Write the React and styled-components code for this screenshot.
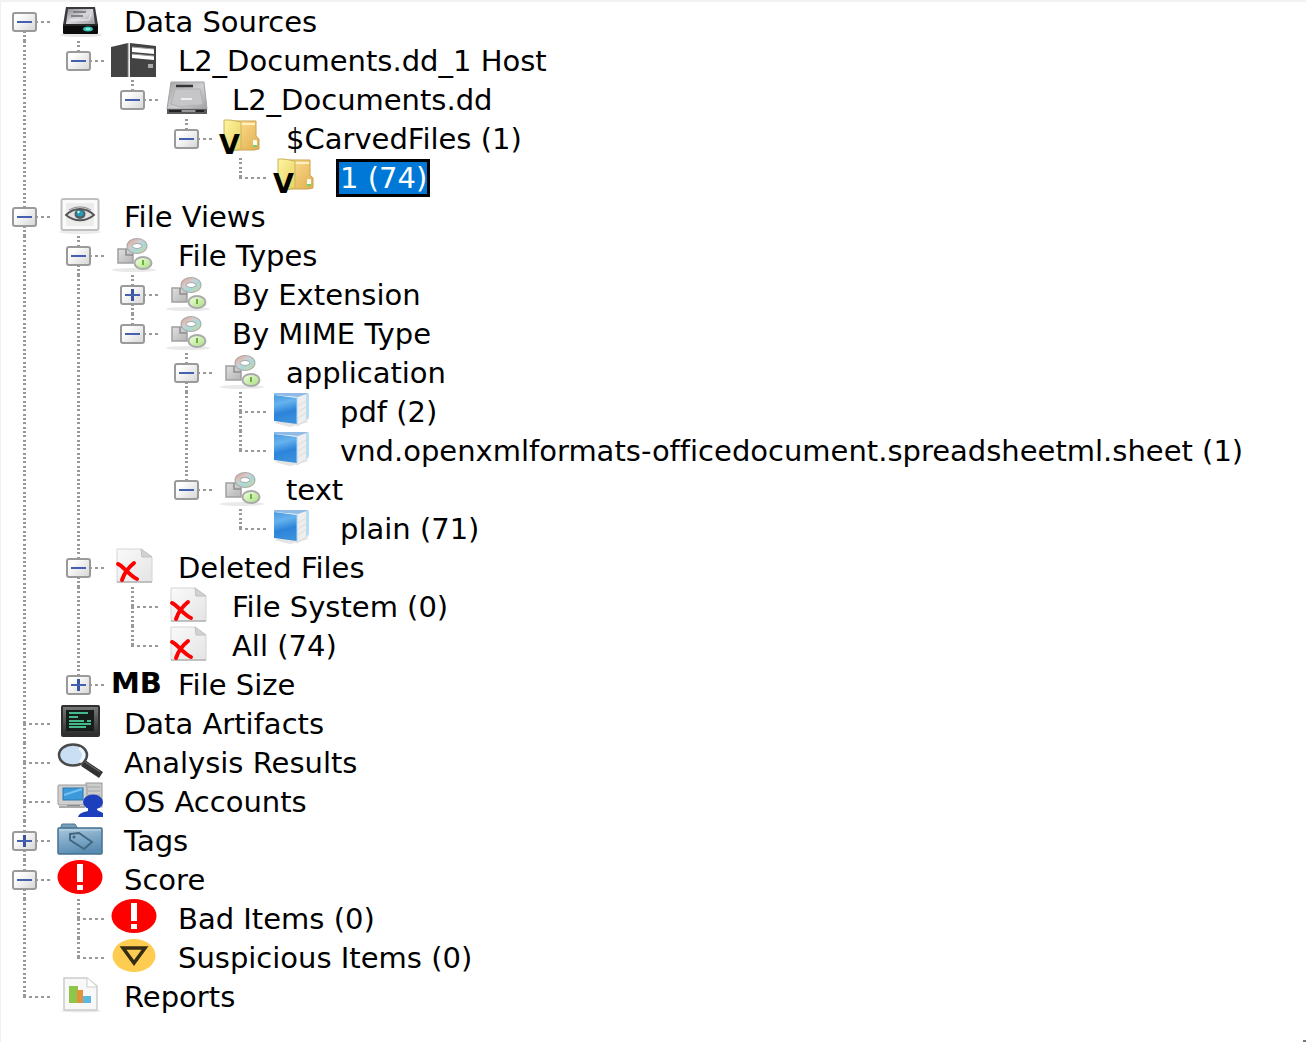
import React, { useState } from "react";
import styled, { createGlobalStyle, css } from "styled-components";

const GlobalStyle = createGlobalStyle`
  * { box-sizing: border-box; }
  body {
    margin: 0;
    background: #fff;
    color: #000;
    font-family: "DejaVu Sans", "Noto Sans", sans-serif;
    font-size: 29px;
    line-height: 32px;
    font-variant-ligatures: none;
  }
`;

const COLUMN = "54px";
const ROW = "39px";

/* Dotted connector strokes; one vertical tile is a third of a row. */
const dotsDown = `repeating-linear-gradient(to bottom,
  #999 0 2px, transparent 2px 4px, #999 4px 6px, transparent 6px 9px,
  #999 9px 11px, transparent 11px 13px)`;
const dotsAcross = `repeating-linear-gradient(to right,
  #999 0 3px, transparent 3px 6px)`;

const Page = styled.main`
  display: flex;
  flex-direction: column;
  min-height: 100vh;
  border-top: 2px solid #f2f2f2;
  border-left: 1px solid #f0f0f0;
  background: #fff;
`;

const Tree = styled.ul`
  margin: 0;
  padding: 0;
  list-style: none;
`;

const Row = styled.div`
  display: flex;
  align-items: center;
  min-height: ${ROW};
`;

const Guide = styled.span`
  flex: none;
  align-self: stretch;
  width: ${COLUMN};
  background: ${(p) => (p.$line ? `${dotsDown} 22px 0 / 3px 100% no-repeat` : "none")};
`;

const Joint = styled.span`
  flex: none;
  align-self: stretch;
  display: flex;
  align-items: center;
  width: ${COLUMN};
  padding-left: 11px;
  ${(p) => css`
    background-image: ${dotsAcross},
      ${p.$up ? dotsDown : "none"},
      ${p.$down ? dotsDown : "none"};
  `}
  background-repeat: no-repeat;
  background-position: 22px 19px, 22px 0, 22px 100%;
  background-size: 27px 2px, 3px 21px, 3px 19px;
`;

const Expander = styled.button`
  display: grid;
  place-items: center;
  width: 25px;
  height: 20px;
  margin: 0;
  padding: 0;
  border: 2px solid #9a9a9a;
  border-radius: 3px;
  background: linear-gradient(135deg, #fff 20%, #d8d8d8);
  cursor: pointer;
`;

const Sign = styled.span`
  width: 15px;
  height: 12px;
  background:
    linear-gradient(#4460ae, #4460ae) center / 15px 2px no-repeat,
    linear-gradient(#3c55a0, #3c55a0) center / ${(p) => (p.$plus ? "3px 12px" : "0 0")} no-repeat;
`;

const IconBox = styled.span`
  flex: none;
  display: flex;
  align-items: center;
  width: 48px;
  height: ${ROW};
`;

const SizeUnit = styled.span`
  padding: 0 0 4px 2px;
  font-size: 29px;
  font-weight: bold;
`;

const Label = styled.span`
  margin-left: 17px;
  padding: 0 0 0 1px;
  border: 3px solid ${(p) => (p.$selected ? "#000" : "transparent")};
  background: ${(p) => (p.$selected ? "#0078d7" : "transparent")};
  color: ${(p) => (p.$selected ? "#fff" : "#000")};
  white-space: nowrap;
`;

const Grip = styled.span`
  align-self: flex-end;
  width: 3px;
  height: 2px;
  margin-top: auto;
  background: #777;
`;

const HiddenDefs = styled.svg`
  position: absolute;
`;

const Drawing = styled.svg`
  display: block;
  overflow: visible;
`;

const Svg = ({ children }) => (
  <Drawing width="48" height="39" viewBox="0 0 48 39" aria-hidden="true">
    {children}
  </Drawing>
);

function Gradients() {
  const g = (id, stops, x2 = 1, y2 = 1) => (
    <linearGradient id={id} x1="0" y1="0" x2={x2} y2={y2}>
      {stops.map((c, i) => (
        <stop key={i} offset={i / (stops.length - 1)} stopColor={c} />
      ))}
    </linearGradient>
  );
  return (
    <HiddenDefs width="0" height="0" aria-hidden="true">
      <defs>
        {g("metal", ["#8e8e92", "#d9d9dd", "#99999d"])}
        {g("steel", ["#a8a8aa", "#cfcfd2", "#98989b"])}
        {g("paper", ["#fafafa", "#e4e4e4"])}
        {g("grey", ["#e0e0e0", "#b4b4b4"])}
        {g("ring", ["#e3aaa0", "#cfcfcf", "#a7d9da", "#c9d6a2"])}
        {g("green", ["#f4ffe8", "#a9dd7c"])}
        {g("blue", ["#4b9ae0", "#66b2ee", "#2c84da", "#3a8fdb"], 0.2, 1)}
        {g("yellow", ["#fdf5a0", "#e8d162"])}
        {g("amber", ["#ffdf91", "#dfae4f"])}
        {g("bezel", ["#777", "#2d2d2d"], 0, 1)}
        {g("folder", ["#a9c8de", "#5a8db3"], 0.3, 1)}
      </defs>
    </HiddenDefs>
  );
}

const BlackDrive = () => (
  <Svg>
    <ellipse cx="26" cy="33" rx="21" ry="2" fill="#e6e6e6" />
    <path d="M11 5h29l3 18H8z" fill="#3a3a3c" />
    <path d="M13 7h25l2 15H11z" fill="url(#metal)" />
    <path d="M18 10h13M16 14h12" stroke="#6f6f73" strokeWidth="1.5" />
    <path d="M14 18h20l2-6" stroke="#eee" fill="none" />
    <rect x="8" y="22" width="35" height="10" rx="1" fill="#0b0b0b" />
    <path d="M8 23h35" stroke="#444" />
    <ellipse cx="33" cy="27" rx="5" ry="2.5" fill="#35b9ac" />
    <ellipse cx="33" cy="27" rx="2.5" ry="1.2" fill="#7cf0e2" />
  </Svg>
);

const Server = () => (
  <Svg>
    <path d="M2 6 19 2v34H2zM21 2l26 3v31H21z" fill="#434343" />
    <path d="M19.500 2v34" stroke="#bbb" strokeWidth="1.500" />
    <path d="M23 6l22 2v5l-22-2zM23 13l22 2v4l-22-2z" fill="#fff" />
    <path d="M23 6l22 2M23 13l22 2" stroke="#999" />
    <rect x="39" y="23" width="5" height="4" fill="#aaa" />
  </Svg>
);

const GreyDrive = () => (
  <Svg>
    <path d="M8 2h33l3 27v5H4v-5z" fill="url(#steel)" />
    <path d="M8 2h33l3 27H4z" fill="none" stroke="#a2a2a5" />
    <path d="M12 9h25l3 15c-6 3-10 0-16 2s-10 0-16-2z" fill="#c6c6c9" stroke="#b0b0b3" />
    <path d="M13 6h17" stroke="#333" strokeWidth="2.500" />
    <path d="M18 19h11" stroke="#eee" strokeWidth="2" />
    <rect x="4" y="29" width="40" height="5" fill="#59595b" />
    <path d="M6 31h12M33 31h8" stroke="#222" strokeWidth="2" />
    <path d="M19 31h13" stroke="#999" strokeWidth="2" />
  </Svg>
);

const VirtualFolder = () => (
  <Svg>
    <path d="M18 2h21v15l3 3v10l-5 1H18z" fill="url(#amber)" stroke="#cba353" />
    <path d="M20 5h18" stroke="#fff0c2" strokeWidth="2" />
    <path d="M7 1h6l11 2v27l-9 2-8-5z" fill="url(#yellow)" stroke="#cdb458" />
    <rect x="36" y="21" width="4" height="7" rx="1" fill="#f3fff0" />
    <rect x="36" y="26" width="4" height="2" fill="#72cf72" />
    <text x="2" y="35" fontSize="27" fontWeight="bold" fontFamily="DejaVu Sans, sans-serif">V</text>
  </Svg>
);

const Eye = () => (
  <Svg>
    <ellipse cx="25" cy="35" rx="21" ry="2" fill="#ececec" />
    <rect x="6.500" y="2" width="37" height="31" rx="2" fill="#fafafa" stroke="#bfbfbf" strokeWidth="2" />
    <rect x="11" y="6" width="28" height="23" fill="#ececec" />
    <path d="M11 18c8-8 20-8 28 0-8 7-20 7-28 0z" fill="#e2e2e2" stroke="#555" strokeWidth="1.800" />
    <path d="M14 13c7-4 15-4 22 0" fill="none" stroke="#999" strokeWidth="1.200" />
    <ellipse cx="25" cy="17" rx="5.500" ry="5" fill="#505c60" />
    <ellipse cx="25" cy="16.500" rx="3.500" ry="3" fill="#2699b4" />
    <circle cx="23.500" cy="15" r="1.200" fill="#bff" />
  </Svg>
);

const FileTypes = () => (
  <Svg>
    <ellipse cx="25" cy="34" rx="22" ry="2" fill="#e9e9e9" />
    <rect x="9" y="13" width="15" height="14" fill="url(#grey)" stroke="#a0a0a0" strokeWidth="1.500" />
    <path d="M17 13v6h7" fill="none" stroke="#8d8d8d" strokeWidth="1.500" />
    <ellipse cx="28" cy="10" rx="7.500" ry="5" fill="none" stroke="#a9a9a9" strokeWidth="6" />
    <ellipse cx="28" cy="10" rx="7.500" ry="5" fill="none" stroke="url(#ring)" strokeWidth="4" />
    <ellipse cx="34" cy="27" rx="8.500" ry="6" fill="url(#green)" stroke="#aaa" strokeWidth="2" />
    <path d="M34 24v5" stroke="#68b23c" strokeWidth="2" />
  </Svg>
);

const BlueFolder = () => (
  <Svg>
    <path d="M3 31l16 4 19-5-12-5z" fill="#e4e4e4" />
    <path d="M25 3l12-1v25l-11 7z" fill="#eee" stroke="#dadada" />
    <path d="M35 2h3v23l-3 3z" fill="#b9dcf5" />
    <path d="M27 14l8-5M27 20l8-5M27 26l8-5" stroke="#dcdcdc" />
    <path d="M3 1h35l-11 4-24-2z" fill="#8fbbe6" />
    <path d="M3 3l23 3v26L3 29z" fill="url(#blue)" />
    <path d="M26 6v26" stroke="#a7d4f5" />
  </Svg>
);

const DeletedPage = () => (
  <Svg>
    <path d="M8 1h24l11 8v25H8z" fill="url(#paper)" stroke="#d4d4d4" />
    <path d="M32 1l1 8h10z" fill="#d2d2d2" stroke="#c0c0c0" />
    <path d="M8 34h35" stroke="#b3b3b3" strokeWidth="1.500" />
    <path d="M9 16c4 1 12 12 19 15M25 15c-5 4-10 11-12 17" fill="none" stroke="#f00" strokeWidth="4" strokeLinecap="round" />
  </Svg>
);

const Terminal = () => (
  <Svg>
    <rect x="6" y="1" width="39" height="32" rx="2" fill="#303030" />
    <rect x="8" y="3" width="35" height="28" fill="url(#bezel)" />
    <rect x="11" y="6" width="28" height="21" fill="#161d1b" />
    <path d="M14 9h19M14 13h9M14 17h15M32 17h4M14 20h22M14 23h17" stroke="#43b98c" strokeWidth="2" />
  </Svg>
);

const Magnifier = () => (
  <Svg>
    <path d="M28 20l18 12" stroke="#333" strokeWidth="7" />
    <path d="M30 19l15 10" stroke="#777" strokeWidth="1" />
    <ellipse cx="18" cy="12" rx="14" ry="10.500" fill="#cadff3" stroke="#4a4a4a" strokeWidth="2.500" />
    <path d="M24 5c6 4 6 10 1 14" fill="none" stroke="#eef7ff" strokeWidth="3" />
  </Svg>
);

const Accounts = () => (
  <Svg>
    <rect x="31" y="1" width="16" height="24" fill="#ccc" stroke="#999" />
    <path d="M33 5h12M33 9h12M33 13h12" stroke="#a4a4a4" />
    <path d="M12 21h13v4H12z" fill="#777" />
    <rect x="3" y="3" width="29" height="20" rx="1" fill="#d0d0d0" stroke="#999" />
    <rect x="8" y="6" width="20" height="12" fill="#3c9adb" stroke="#2c77ac" />
    <path d="M9 13l18-6" stroke="#77c0ee" strokeWidth="2" />
    <path d="M4 25h26" stroke="#aaa" strokeWidth="2" />
    <ellipse cx="38" cy="20" rx="10" ry="7.500" fill="#1c3fbd" />
    <path d="M33 25h9v3l6 3v4H23c1-4 6-5 10-6z" fill="#1c3fbd" />
  </Svg>
);

const TagFolder = () => (
  <Svg>
    <path d="M5 8l2-5h13l3 5" fill="#779db9" stroke="#4f7897" />
    <rect x="3" y="7" width="44" height="26" rx="1" fill="url(#folder)" stroke="#44708f" strokeWidth="1.500" />
    <path d="M4 9h42" stroke="#bfd8e8" />
    <path d="M15 13l9-1 13 9-8 7-14-9z" fill="none" stroke="#416781" strokeWidth="2" />
    <circle cx="19" cy="16" r="1.500" fill="#416781" />
  </Svg>
);

const Alert = () => (
  <Svg>
    <ellipse cx="25" cy="17" rx="22.500" ry="17" fill="#f00" />
    <rect x="22" y="4" width="6" height="18" fill="#fff" />
    <rect x="22" y="25" width="6" height="5" fill="#fff" />
  </Svg>
);

const Suspicious = () => (
  <Svg>
    <ellipse cx="25" cy="17.500" rx="21.500" ry="16.500" fill="#ffcc52" />
    <path d="M14 10h22L25 25z" fill="none" stroke="#352c14" strokeWidth="3.500" />
  </Svg>
);

const Report = () => (
  <Svg>
    <ellipse cx="26" cy="34" rx="20" ry="1.500" fill="#e8e8e8" />
    <path d="M9 1h23l10 8v24H9z" fill="#f8f8f8" stroke="#ccc" strokeWidth="1.500" />
    <path d="M32 1v9h10" fill="#fff" stroke="#ccc" />
    <rect x="14" y="9" width="9" height="17" fill="#8fc64a" />
    <rect x="22" y="13" width="6" height="13" fill="#e3923c" />
    <rect x="28" y="19" width="8" height="7" fill="#58b8dd" />
  </Svg>
);

const Megabytes = () => <SizeUnit aria-hidden="true">MB</SizeUnit>;

const DATA = [
  { label: "Data Sources", icon: BlackDrive, children: [
    { label: "L2_Documents.dd_1 Host", icon: Server, children: [
      { label: "L2_Documents.dd", icon: GreyDrive, children: [
        { label: "$CarvedFiles (1)", icon: VirtualFolder, children: [
          { label: "1 (74)", icon: VirtualFolder, selected: true },
        ] },
      ] },
    ] },
  ] },
  { label: "File Views", icon: Eye, children: [
    { label: "File Types", icon: FileTypes, children: [
      { label: "By Extension", icon: FileTypes, closed: true },
      { label: "By MIME Type", icon: FileTypes, children: [
        { label: "application", icon: FileTypes, children: [
          { label: "pdf (2)", icon: BlueFolder },
          { label: "vnd.openxmlformats-officedocument.spreadsheetml.sheet (1)", icon: BlueFolder },
        ] },
        { label: "text", icon: FileTypes, children: [
          { label: "plain (71)", icon: BlueFolder },
        ] },
      ] },
    ] },
    { label: "Deleted Files", icon: DeletedPage, children: [
      { label: "File System (0)", icon: DeletedPage },
      { label: "All (74)", icon: DeletedPage },
    ] },
    { label: "File Size", icon: Megabytes, closed: true },
  ] },
  { label: "Data Artifacts", icon: Terminal },
  { label: "Analysis Results", icon: Magnifier },
  { label: "OS Accounts", icon: Accounts },
  { label: "Tags", icon: TagFolder, closed: true },
  { label: "Score", icon: Alert, children: [
    { label: "Bad Items (0)", icon: Alert },
    { label: "Suspicious Items (0)", icon: Suspicious },
  ] },
  { label: "Reports", icon: Report },
];

function Node({ node, guides, first, last }) {
  const [open, setOpen] = useState(!node.closed);
  const expandable = Boolean(node.children || node.closed);
  const Icon = node.icon;
  return (
    <li role="treeitem" aria-expanded={expandable ? open : undefined} aria-selected={Boolean(node.selected)}>
      <Row>
        {guides.map((line, i) => (
          <Guide key={i} $line={line} />
        ))}
        <Joint $up={!first} $down={!last}>
          {expandable && (
            <Expander
              type="button"
              aria-label={`${open ? "Collapse" : "Expand"} ${node.label}`}
              onClick={() => setOpen(!open)}
            >
              <Sign $plus={!open} />
            </Expander>
          )}
        </Joint>
        <IconBox>
          <Icon />
        </IconBox>
        <Label $selected={node.selected}>{node.label}</Label>
      </Row>
      {open && node.children && (
        <Tree role="group">
          {node.children.map((child, i) => (
            <Node
              key={child.label}
              node={child}
              guides={[...guides, !last]}
              last={i === node.children.length - 1}
            />
          ))}
        </Tree>
      )}
    </li>
  );
}

export default function App() {
  return (
    <>
      <GlobalStyle />
      <Gradients />
      <Page>
        <Tree role="tree" aria-label="Case contents">
          {DATA.map((node, i) => (
            <Node
              key={node.label}
              node={node}
              guides={[]}
              first={i === 0}
              last={i === DATA.length - 1}
            />
          ))}
        </Tree>
        <Grip />
      </Page>
    </>
  );
}
